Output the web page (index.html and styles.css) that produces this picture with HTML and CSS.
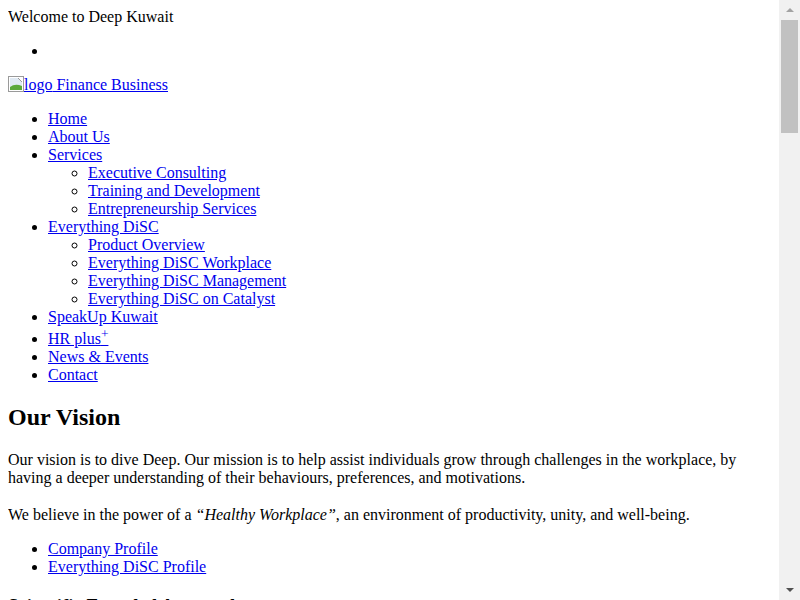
FILE: index.html
```html
<!DOCTYPE html>
<html>
<head>
<meta charset="utf-8">
<title>Deep Kuwait</title>
<link rel="stylesheet" href="styles.css">
</head>
<body>
<div class="topbar">Welcome to Deep Kuwait</div>
<ul class="social"><li></li></ul>
<a class="brand" href="#"><span class="broken"><svg width="16" height="16" viewBox="0 0 16 16"><rect x="0.5" y="0.5" width="15" height="15" fill="#fff" stroke="#9a9a9a"/><rect x="2" y="2" width="12" height="12" fill="#dfe9f3"/><path d="M2 14 L2 11 Q7 7 14 10 L14 14 Z" fill="#5aa83a"/><path d="M10 2 L14 2 L14 6 Z" fill="#fff"/><path d="M10 2 L14 6" stroke="#9a9a9a" fill="none"/></svg><span class="alt">logo</span></span> Finance Business</a>
<ul class="menu">
  <li><a href="#">Home</a></li>
  <li><a href="#">About Us</a></li>
  <li><a href="#">Services</a>
    <ul>
      <li><a href="#">Executive Consulting</a></li>
      <li><a href="#">Training and Development</a></li>
      <li><a href="#">Entrepreneurship Services</a></li>
    </ul>
  </li>
  <li><a href="#">Everything DiSC</a>
    <ul>
      <li><a href="#">Product Overview</a></li>
      <li><a href="#">Everything DiSC Workplace</a></li>
      <li><a href="#">Everything DiSC Management</a></li>
      <li><a href="#">Everything DiSC on Catalyst</a></li>
    </ul>
  </li>
  <li><a href="#">SpeakUp Kuwait</a></li>
  <li><a href="#">HR plus<sup>+</sup></a></li>
  <li><a href="#">News &amp; Events</a></li>
  <li><a href="#">Contact</a></li>
</ul>
<h2>Our Vision</h2>
<p>Our vision is to dive Deep. Our mission is to help assist individuals grow through challenges in the workplace, by having a deeper understanding of their behaviours, preferences, and motivations.</p>
<p class="belief">We believe in the power of a <em>“Healthy Workplace”</em>, an environment of productivity, unity, and well-being.</p>
<ul class="links">
  <li><a href="#">Company Profile</a></li>
  <li><a href="#">Everything DiSC Profile</a></li>
</ul>
<h3>Scientific Founded Approach</h3>
<p>Our approach is grounded in research and validated assessment tools that help people and teams understand themselves and each other.</p>
<div class="scrollbar">
  <div class="arrow up"></div>
  <div class="thumb"></div>
  <div class="track"></div>
  <div class="arrow down"></div>
</div>
</body>
</html>
```
FILE: styles.css
```css
html {
  font-family: "Liberation Serif", "Times New Roman", serif;
  font-size: 16px;
}
body {
  margin: 8px 29px 8px 8px;
  color: #000;
  background: #fff;
}
a {
  color: #0000ee;
}
.broken svg {
  vertical-align: -2px;
}
.menu ul {
  list-style-type: circle;
}
.belief {
  padding-top: 3px;
}
.scrollbar {
  position: fixed;
  top: 0;
  right: 0;
  width: 21px;
  height: 100vh;
  background: #f1f1f1;
  display: flex;
  flex-direction: column;
  align-items: center;
}
.arrow {
  height: 20px;
  width: 21px;
  flex: none;
  display: flex;
  align-items: center;
  justify-content: center;
}
.arrow::before {
  content: "";
  border-left: 4px solid transparent;
  border-right: 4px solid transparent;
}
.up::before {
  border-bottom: 4px solid #a3a3a3;
}
.down::before {
  border-top: 4px solid #505050;
}
.thumb {
  width: 17px;
  height: 113px;
  flex: none;
  background: #c1c1c1;
}
.track {
  flex: 1;
}
```
